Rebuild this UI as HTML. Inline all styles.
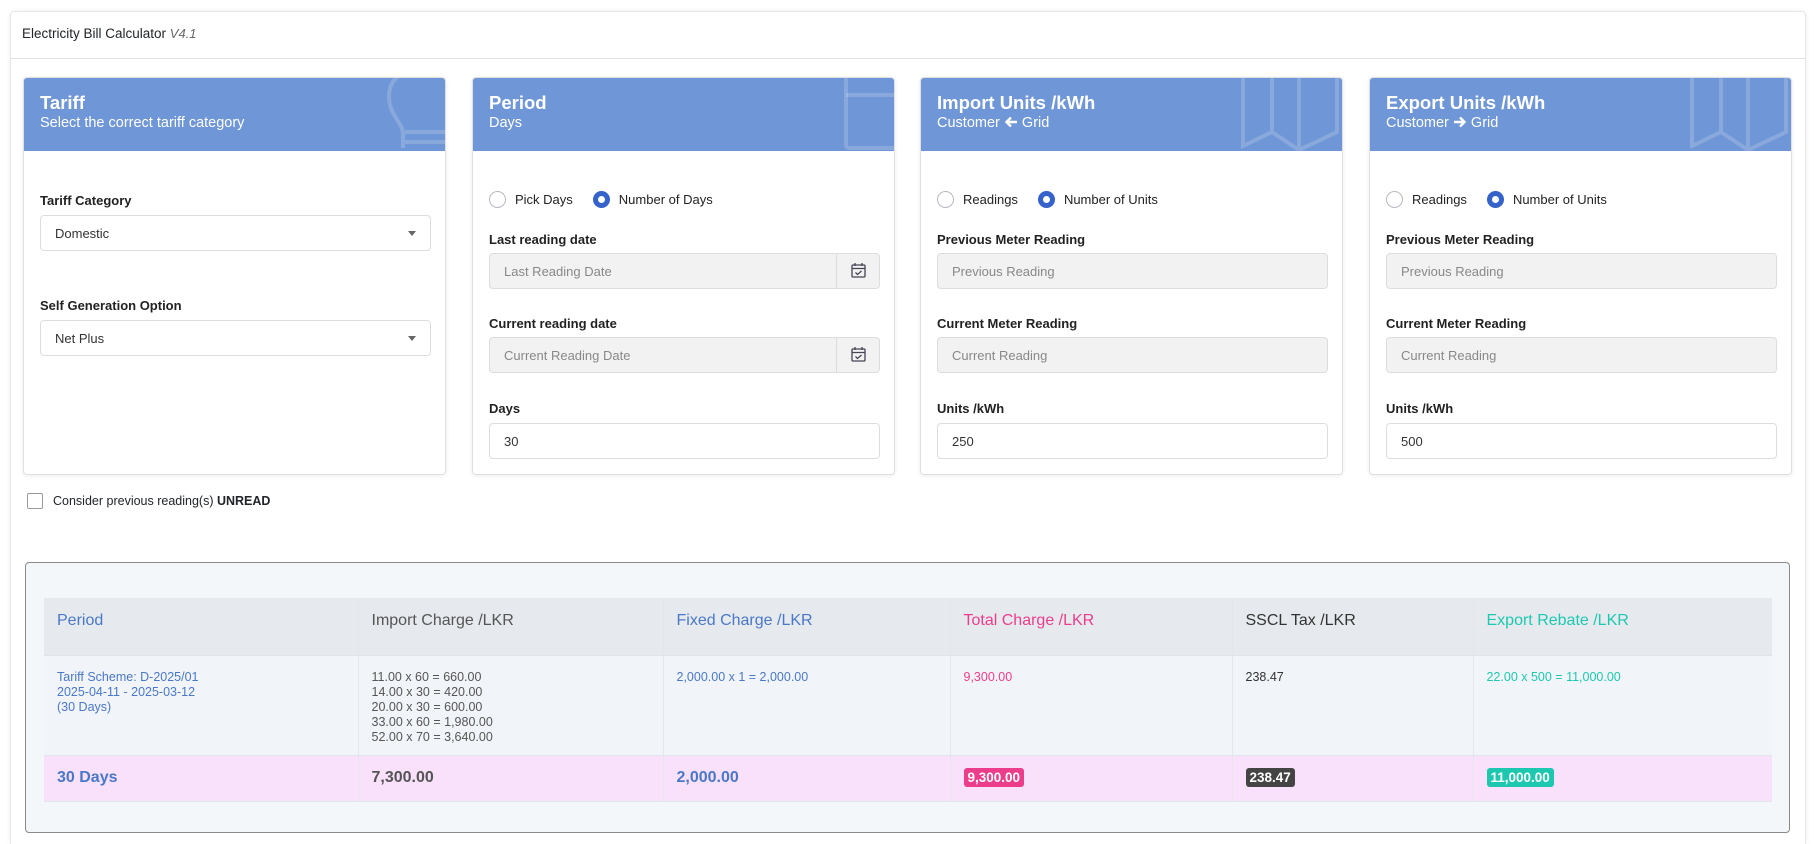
<!DOCTYPE html>
<html style="height:844px;overflow:hidden"><head><meta charset="utf-8"><style>
*{box-sizing:border-box;margin:0;padding:0}
body{width:1817px;height:844px;background:#fff;font-family:"Liberation Sans",sans-serif;color:#212529;position:relative;overflow:hidden}
.outer{position:absolute;left:10px;top:11px;width:1796px;height:833px;border:1px solid #e6e6e6;border-bottom:none;border-radius:4px 4px 0 0;box-shadow:0 0 6px rgba(0,0,0,.06)}
.hdr{position:absolute;left:10px;top:11px;width:1796px;height:48px;border-bottom:1px solid #e3e3e3;font-size:13.5px;padding:15px 12px}
.hdr i{color:#666;font-size:13px}
.card{position:absolute;top:77px;width:423px;height:398px;border:1px solid #e0e0e0;border-radius:4px;box-shadow:0 1px 4px rgba(0,0,0,.08);overflow:hidden;background:#fff}
.ch{height:73px;background:#6f96d6;color:#fff;padding:14px 16px;position:relative;overflow:hidden}
.ch b{display:block;font-size:18.5px;line-height:22px}
.ch span{font-size:14.5px;line-height:18px}
.ch svg.bg{position:absolute;right:0;top:0}
.lbl{position:absolute;left:16px;font-size:13px;font-weight:bold;color:#222}
.inp{position:absolute;left:16px;width:391px;height:36px;border:1px solid #ddd;border-radius:4px;font-size:13px;padding:10px 14px;color:#333;background:#fff}
.inp.dis{background:#f2f2f2;color:#888}
.sel:after{content:"";position:absolute;right:14px;top:15px;border:4px solid transparent;border-top:5px solid #666}
.cal{position:absolute;right:0;top:0;width:43px;height:34px;border-left:1px solid #ddd}
.rad{position:absolute;top:113px;left:16px;font-size:13px;display:flex;align-items:center;color:#222}
.r{width:17px;height:17px;border-radius:50%;border:1.5px solid #b5b9c0;margin-right:9px;display:inline-block}
.r.on{border:5px solid #3563c9;background:#fff}
.res{position:absolute;left:25px;top:562px;width:1765px;height:271px;background:#f4f7fa;border:1px solid #8a8a8a;border-radius:4px}
table{position:absolute;left:18px;top:35px;width:1728px;border-collapse:collapse}
td{vertical-align:top;padding:0 13px;border-left:1px solid #e3e6ea}
td:first-child{border-left:none}
tr.h td{background:#e6eaee;height:57px;font-size:16px;padding-top:14px}
tr.b td{background:#f1f4f8;height:100px;font-size:12.5px;line-height:15px;padding-top:14px;border-top:1px solid #e0e3e7}
tr.t td{background:#f9e1fb;height:46px;font-size:16px;font-weight:bold;padding-top:13px;border-top:1px solid #e3e6ea;border-bottom:1px solid #e3e6ea}
.bl{color:#4a78c8}.gr{color:#555}.pk{color:#ec3d8c}.dk{color:#333}.gn{color:#1ec8b0}
.bd{display:inline-block;color:#fff;font-size:13.5px;padding:2px 4px;border-radius:3px;margin-top:-1px}
</style></head><body>
<div class="outer"></div>
<div class="hdr">Electricity Bill Calculator <i>V4.1</i></div>

<div class="card" style="left:23px">
 <div class="ch"><b>Tariff</b><span>Select the correct tariff category</span>
 <svg class="bg" width="60" height="73" viewBox="0 0 60 73"><g fill="none" stroke="rgba(255,255,255,.18)" stroke-width="4"><path d="M18 70 V56 C18 44 4 38 4 18 C4 0 20 -10 40 -10 C60 -10 76 0 76 18"/><path d="M20 54 H60 M20 64 H60"/></g></svg></div>
 <div class="lbl" style="top:115px">Tariff Category</div>
 <div class="inp sel" style="top:137px">Domestic</div>
 <div class="lbl" style="top:220px">Self Generation Option</div>
 <div class="inp sel" style="top:242px">Net Plus</div>
</div>

<div class="card" style="left:472px">
 <div class="ch"><b>Period</b><span>Days</span>
 <svg class="bg" width="60" height="73" viewBox="0 0 60 73"><g fill="none" stroke="rgba(255,255,255,.18)" stroke-width="4"><rect x="12" y="-10" width="60" height="80" rx="3"/><path d="M12 17 H60"/></g></svg></div>
 <div class="rad"><span class="r"></span>Pick Days<span style="width:20px"></span><span class="r on"></span>Number of Days</div>
 <div class="lbl" style="top:154px">Last reading date</div>
 <div class="inp dis" style="top:175px">Last Reading Date<div class="cal"><svg width="43" height="34" viewBox="0 0 43 34"><g fill="none" stroke="#445" stroke-width="1.3"><rect x="15" y="11" width="13" height="12" rx="1"/><path d="M15 14.5H28M18 9v3M25 9v3M18.5 18.5l2 2 4-3.5"/></g></svg></div></div>
 <div class="lbl" style="top:238px">Current reading date</div>
 <div class="inp dis" style="top:259px">Current Reading Date<div class="cal"><svg width="43" height="34" viewBox="0 0 43 34"><g fill="none" stroke="#445" stroke-width="1.3"><rect x="15" y="11" width="13" height="12" rx="1"/><path d="M15 14.5H28M18 9v3M25 9v3M18.5 18.5l2 2 4-3.5"/></g></svg></div></div>
 <div class="lbl" style="top:323px">Days</div>
 <div class="inp" style="top:345px">30</div>
</div>

<div class="card" style="left:920px">
 <div class="ch"><b>Import Units /kWh</b><span>Customer <svg width="14" height="12" viewBox="0 0 14 12" style="vertical-align:-1px"><path d="M13 6H3M7 1.5L2.5 6 7 10.5" fill="none" stroke="#fff" stroke-width="2.4"/></svg> Grid</span>
 <svg class="bg" width="105" height="73" viewBox="0 0 105 73"><g fill="none" stroke="rgba(255,255,255,.18)" stroke-width="4"><path d="M6 -5 V68 L35 54 L62 72 L100 54 V-5 M35 -5 V54 M62 -5 V72"/></g></svg></div>
 <div class="rad"><span class="r"></span>Readings<span style="width:20px"></span><span class="r on"></span>Number of Units</div>
 <div class="lbl" style="top:154px">Previous Meter Reading</div>
 <div class="inp dis" style="top:175px">Previous Reading</div>
 <div class="lbl" style="top:238px">Current Meter Reading</div>
 <div class="inp dis" style="top:259px">Current Reading</div>
 <div class="lbl" style="top:323px">Units /kWh</div>
 <div class="inp" style="top:345px">250</div>
</div>

<div class="card" style="left:1369px">
 <div class="ch"><b>Export Units /kWh</b><span>Customer <svg width="14" height="12" viewBox="0 0 14 12" style="vertical-align:-1px"><path d="M1 6H11M7 1.5L11.5 6 7 10.5" fill="none" stroke="#fff" stroke-width="2.4"/></svg> Grid</span>
 <svg class="bg" width="105" height="73" viewBox="0 0 105 73"><g fill="none" stroke="rgba(255,255,255,.18)" stroke-width="4"><path d="M6 -5 V68 L35 54 L62 72 L100 54 V-5 M35 -5 V54 M62 -5 V72"/></g></svg></div>
 <div class="rad"><span class="r"></span>Readings<span style="width:20px"></span><span class="r on"></span>Number of Units</div>
 <div class="lbl" style="top:154px">Previous Meter Reading</div>
 <div class="inp dis" style="top:175px">Previous Reading</div>
 <div class="lbl" style="top:238px">Current Meter Reading</div>
 <div class="inp dis" style="top:259px">Current Reading</div>
 <div class="lbl" style="top:323px">Units /kWh</div>
 <div class="inp" style="top:345px">500</div>
</div>

<div style="position:absolute;left:27px;top:493px;font-size:12.5px;display:flex;align-items:center"><span style="width:16px;height:16px;border:1.5px solid #999;border-radius:2px;margin-right:10px"></span>Consider previous reading(s)&nbsp;<b>UNREAD</b></div>

<div class="res"><table>
<colgroup><col style="width:314px"><col style="width:305px"><col style="width:287px"><col style="width:282px"><col style="width:241px"><col></colgroup>
<tr class="h"><td class="bl">Period</td><td class="gr">Import Charge /LKR</td><td class="bl">Fixed Charge /LKR</td><td class="pk">Total Charge /LKR</td><td class="dk">SSCL Tax /LKR</td><td class="gn">Export Rebate /LKR</td></tr>
<tr class="b"><td class="bl">Tariff Scheme: D-2025/01<br>2025-04-11 - 2025-03-12<br>(30 Days)</td><td class="gr">11.00 x 60 = 660.00<br>14.00 x 30 = 420.00<br>20.00 x 30 = 600.00<br>33.00 x 60 = 1,980.00<br>52.00 x 70 = 3,640.00</td><td class="bl">2,000.00 x 1 = 2,000.00</td><td class="pk">9,300.00</td><td class="dk">238.47</td><td class="gn">22.00 x 500 = 11,000.00</td></tr>
<tr class="t"><td class="bl">30 Days</td><td class="gr">7,300.00</td><td class="bl">2,000.00</td><td><span class="bd" style="background:#ec3d8c">9,300.00</span></td><td><span class="bd" style="background:#444">238.47</span></td><td><span class="bd" style="background:#1ec8b0">11,000.00</span></td></tr>
</table></div>
</body></html>
